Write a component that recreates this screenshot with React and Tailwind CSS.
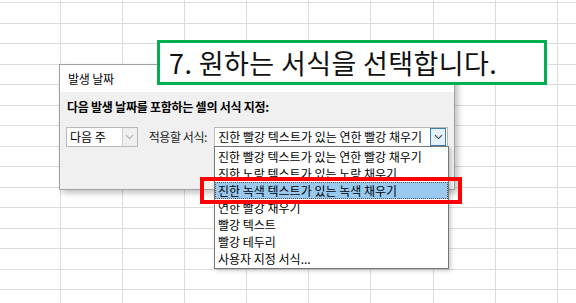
import React from "react";

const rows = Array.from({ length: 15 });
const cols = Array.from({ length: 9 });

const items = [
  "진한 빨강 텍스트가 있는 연한 빨강 채우기",
  "진한 노랑 텍스트가 있는 노랑 채우기",
  "진한 녹색 텍스트가 있는 녹색 채우기",
  "연한 빨강 채우기",
  "빨강 텍스트",
  "빨강 테두리",
  "사용자 지정 서식...",
];

const Chevron = ({ color }) => (
  <svg width="9" height="6" viewBox="0 0 9 6" fill="none">
    <path d="M1 1.2 L4.5 4.6 L8 1.2" stroke={color} strokeWidth="1.1" />
  </svg>
);

const App = () => {
  return (
    <div
      className="relative w-[576px] h-[303px] overflow-hidden bg-white"
      style={{ fontFamily: '"Noto Sans CJK KR", "Noto Sans", sans-serif' }}
    >
      {/* 시트 눈금선 */}
      <div className="absolute inset-0 flex flex-col pt-[2px]">
        {rows.map((_, i) => (
          <div key={i} className="h-[20.5px] shrink-0 border-t border-[#dcdcdc]" />
        ))}
      </div>
      <div className="absolute inset-0 flex pl-[60px]">
        {cols.map((_, i) => (
          <div key={i} className="w-[62.1px] shrink-0 border-l border-[#dcdcdc]" />
        ))}
      </div>

      {/* 발생 날짜 대화 상자 */}
      <div className="absolute left-[59px] top-[64px] w-[396px] h-[126px] flex flex-col border border-[#a0a0a0] shadow-[3px_3px_6px_rgba(0,0,0,0.25)] text-[12px] text-black">
        <div className="h-[27px] bg-white flex items-center pl-[8px] tracking-[-0.2px]">발생 날짜</div>
        <div className="flex-1 bg-[#f0f0f0] flex flex-col px-[6px]">
          <div className="h-[30px] flex items-center pl-[1px] font-bold tracking-[-0.25px]">
            다음 발생 날짜를 포함하는 셀의 서식 지정:
          </div>
          <div className="mt-[5px] flex items-center">
            <div className="w-[72px] h-[20px] bg-white border border-[#b9b9b9] flex items-center">
              <span className="flex-1 pl-[3px]">다음 주</span>
              <span className="w-[15px] h-full bg-[#f0f0f0] border-l border-[#cfcfcf] flex items-center justify-center">
                <Chevron color="#a8a8a8" />
              </span>
            </div>
            <span className="ml-[11px] w-[66px] text-[#222] tracking-[-0.4px] whitespace-nowrap">적용할 서식:</span>
            <div className="w-[235px] h-[20px] bg-white border border-[#b9b9b9] flex items-center">
              <span className="flex-1 pl-[3px] whitespace-nowrap overflow-hidden">
                진한 빨강 텍스트가 있는 연한 빨강 채우기
              </span>
              <span className="w-[16px] h-[18px] shrink-0 bg-[#e5f1fb] border border-[#3c7fb1] flex items-center justify-center mr-[1px]">
                <Chevron color="#404040" />
              </span>
            </div>
          </div>
        </div>
      </div>

      {/* 드롭다운 목록 */}
      <div className="absolute left-[214px] top-[146px] w-[235px] bg-white border border-[#767676] shadow-[2px_2px_4px_rgba(0,0,0,0.2)] flex flex-col py-[1px] text-[12px] text-black">
        {items.map((t, i) => (
          <div
            key={t}
            className={
              i === 2
                ? "h-[17px] flex items-center pl-[3px] bg-[#99c9ef] outline-1 outline-dotted outline-[#555] -outline-offset-1 whitespace-nowrap"
                : "h-[17px] flex items-center pl-[3px] whitespace-nowrap"
            }
          >
            {t}
          </div>
        ))}
      </div>

      {/* 빨간 강조 상자 */}
      <div className="absolute left-[200px] top-[177px] w-[262px] h-[27px] border-[4px] border-[#ff0000]" />

      {/* 설명 상자 */}
      <div className="absolute left-[157px] top-[40px] w-[390px] h-[45px] bg-white border-[3px] border-[#00b050] flex items-center pl-[9px]">
        <span className="text-[27px] text-[#111] tracking-[0.4px] leading-none">7. 원하는 서식을 선택합니다.</span>
      </div>
    </div>
  );
};

export default App;
